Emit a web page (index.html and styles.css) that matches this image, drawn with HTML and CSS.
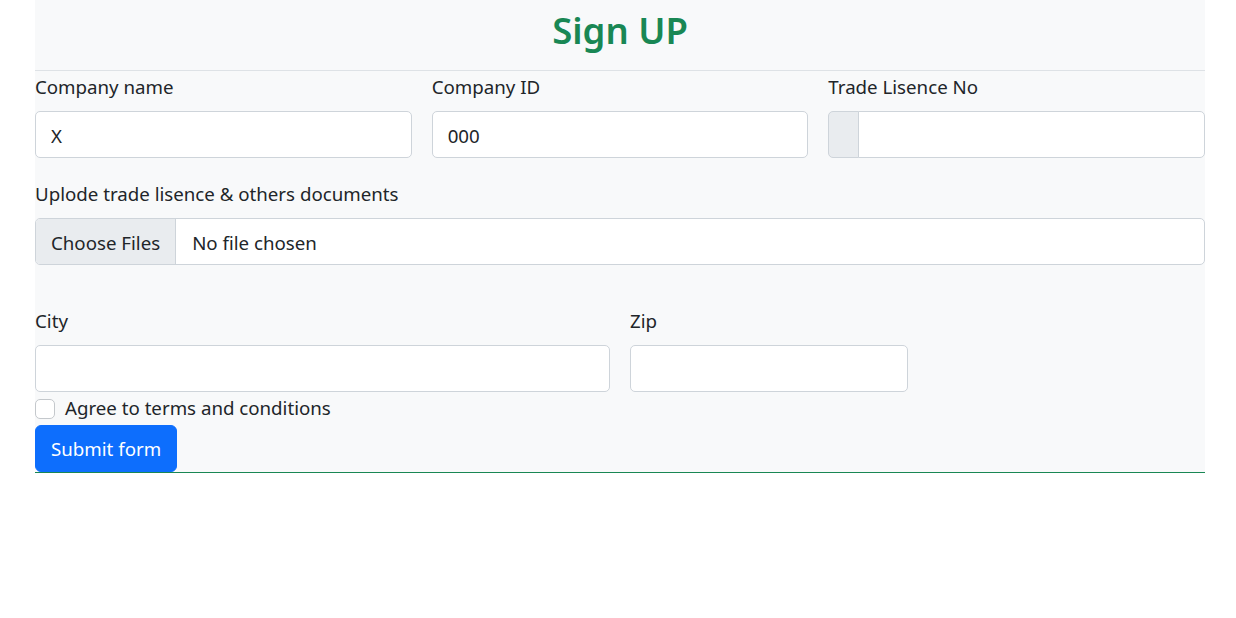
FILE: index.html
```html
<!DOCTYPE html>
<html lang="en">
<head>
<meta charset="utf-8">
<title>Sign UP</title>
<link rel="stylesheet" href="styles.css">
</head>
<body>
<div class="page">
  <form class="signup">
    <header class="signup-head">
      <h1 class="title">Sign UP</h1>
    </header>
    <div class="row row-3">
      <div class="field">
        <label class="label">Company name</label>
        <input class="control" type="text" value="X">
      </div>
      <div class="field">
        <label class="label">Company ID</label>
        <input class="control" type="text" value="000">
      </div>
      <div class="field">
        <label class="label">Trade Lisence No</label>
        <div class="input-group">
          <span class="addon"></span>
          <input class="control control-grouped" type="text">
        </div>
      </div>
    </div>
    <div class="field field-upload">
      <label class="label">Uplode trade lisence &amp; others documents</label>
      <div class="control file-control">
        <span class="file-btn">Choose Files</span>
        <span class="file-name">No file chosen</span>
      </div>
    </div>
    <div class="row row-4">
      <div class="field span-2">
        <label class="label">City</label>
        <input class="control" type="text">
      </div>
      <div class="field">
        <label class="label">Zip</label>
        <input class="control" type="text">
      </div>
    </div>
    <label class="check">
      <span class="check-box"></span>
      <span class="check-label">Agree to terms and conditions</span>
    </label>
    <div class="actions">
      <button class="btn" type="button">Submit form</button>
    </div>
  </form>
</div>
</body>
</html>
```
FILE: styles.css
```css
* { box-sizing: border-box; }
html, body { margin: 0; padding: 0; background: #fff; }
body {
  font-family: "Noto Sans", "Open Sans", sans-serif;
  color: #212529;
  font-size: 18.7px;
  line-height: 30px;
}
.page {
  padding: 0 31px 0 35px;
}
.signup {
  background: #f8f9fa;
  border-bottom: 1px solid #198754;
  display: flex;
  flex-direction: column;
}
.signup-head {
  border-bottom: 1px solid #dee2e6;
  padding: 6px 0 16px;
  text-align: center;
}
.title {
  margin: 0;
  font-size: 36.5px;
  line-height: 48px;
  font-weight: 600;
  color: #198754;
}
.row {
  display: grid;
  column-gap: 20px;
}
.row-3 {
  grid-template-columns: repeat(3, 1fr);
  margin-top: 2px;
}
.row-4 {
  grid-template-columns: repeat(4, 1fr);
  margin-top: 42px;
}
.span-2 { grid-column: span 2; }
.field {
  display: flex;
  flex-direction: column;
}
.field-upload { margin-top: 22px; }
.label {
  line-height: 28px;
  margin-bottom: 10px;
}
.control {
  display: block;
  width: 100%;
  height: 47px;
  padding: 2px 15px 0;
  font: inherit;
  color: #212529;
  background: #fff;
  border: 1px solid #ced4da;
  border-radius: 5px;
  outline: none;
}
.input-group {
  display: flex;
}
.addon {
  flex: 0 0 31px;
  height: 47px;
  background: #e9ecef;
  border: 1px solid #ced4da;
  border-radius: 5px 0 0 5px;
}
.control-grouped {
  flex: 1;
  border-left: 1px solid #ced4da;
  margin-left: -1px;
  border-radius: 0 5px 5px 0;
}
.file-control {
  display: flex;
  align-items: stretch;
  padding: 0;
  overflow: hidden;
}
.file-btn {
  display: flex;
  align-items: center;
  padding: 2px 15px 0;
  background: #e9ecef;
  border-right: 1px solid #ced4da;
}
.file-name {
  display: flex;
  align-items: center;
  padding: 2px 16px 0;
}
.check {
  display: flex;
  align-items: center;
  gap: 10px;
  margin-top: 0;
  height: 33px;
}
.check-box {
  width: 20px;
  height: 20px;
  background: #fff;
  border: 1px solid #c4c8cc;
  border-radius: 5px;
  flex: none;
}
.check-label { line-height: 28px; margin-bottom: 2px; }
.actions { display: flex; }
.btn {
  height: 47px;
  padding: 1px 15px 0;
  font: inherit;
  color: #fff;
  background: #0d6efd;
  border: 1px solid #0d6efd;
  border-radius: 6px;
  cursor: pointer;
}
```
